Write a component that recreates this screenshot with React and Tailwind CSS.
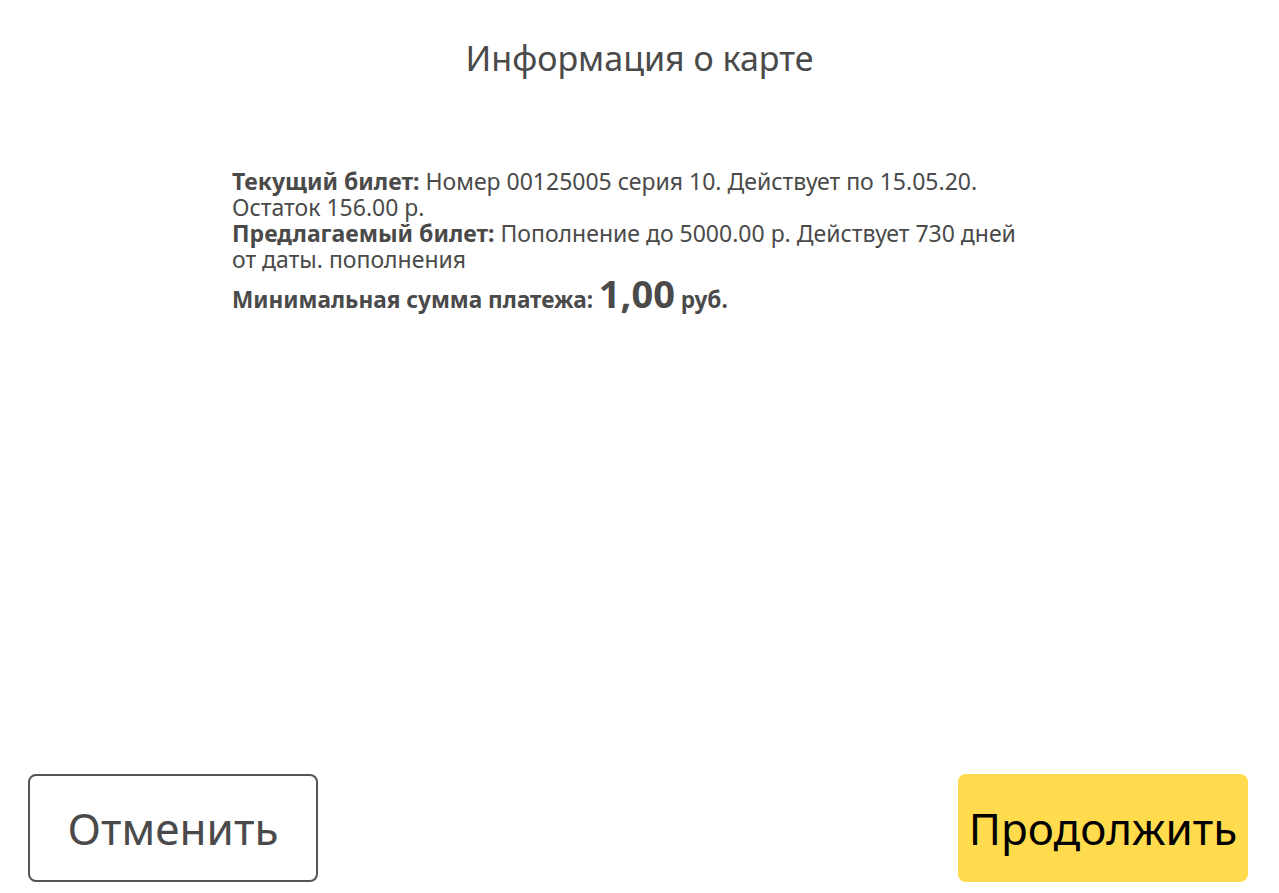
export default function App() {
  return (
    <div className="h-[893px] w-full bg-white flex flex-col text-[#4a4a4a]" style={{ fontFamily: '"Noto Sans", "Open Sans", sans-serif' }}>
      <h1 className="text-center text-[34px] leading-[40px] pt-[38px] font-normal">Информация о карте</h1>
      <div className="ml-[232px] mt-[90px] w-[800px] text-[23px] leading-[26px]">
        <div><b className="font-bold">Текущий билет:</b> Номер 00125005 серия 10. Действует по 15.05.20. Остаток 156.00 р.</div>
        <div><b className="font-bold">Предлагаемый билет:</b> Пополнение до 5000.00 р. Действует 730 дней от даты. пополнения</div>
        <div className="font-bold mt-[8px] text-[22.6px]">Минимальная сумма платежа: <span className="text-[38px]">1,00</span> руб.</div>
      </div>
      <div className="flex-1" />
      <div className="flex justify-between items-end pl-[28px] pr-[31px] pb-[11px]">
        <button className="w-[290px] h-[108px] border-2 border-[#555] rounded-[8px] bg-white text-[#4a4a4a] text-[44px]">Отменить</button>
        <button className="w-[290px] h-[108px] rounded-[8px] bg-[#ffdb4d] text-black text-[44px]">Продолжить</button>
      </div>
    </div>
  );
}
